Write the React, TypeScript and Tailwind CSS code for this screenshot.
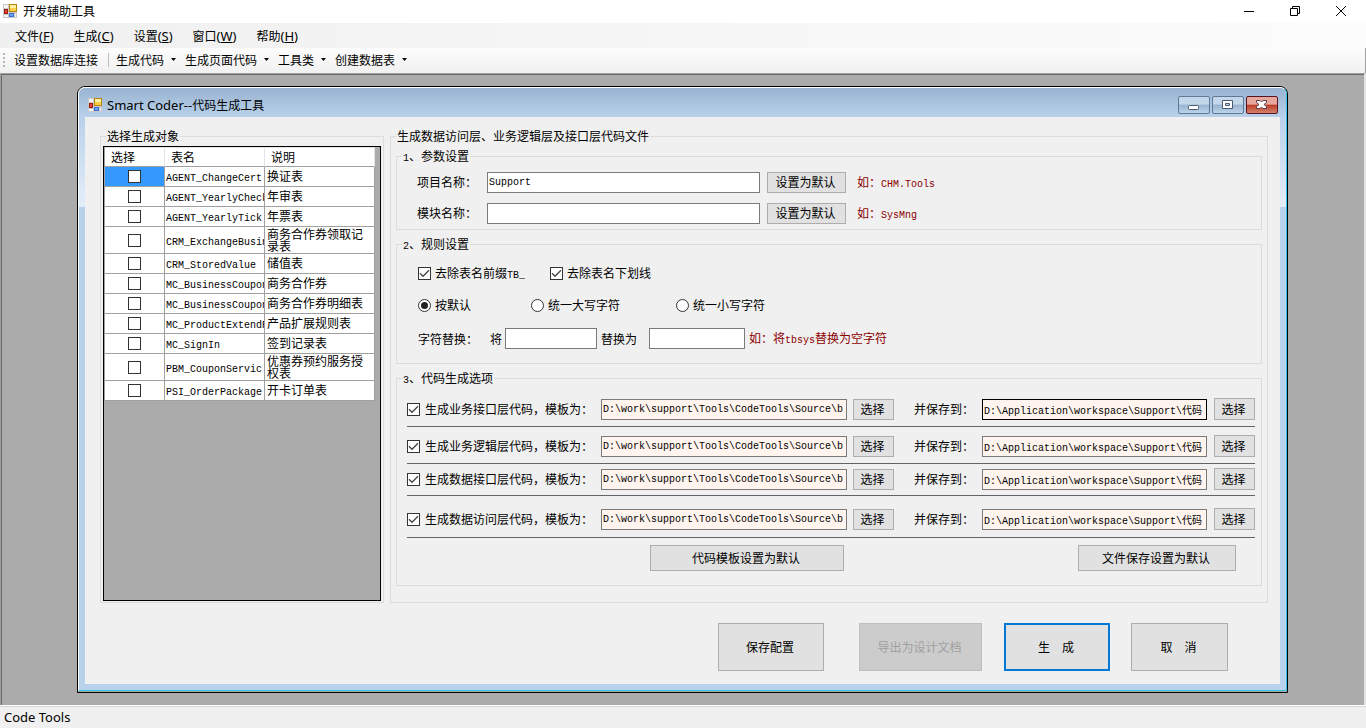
import { useId } from "react";
import type { ReactNode } from "react";
import { clsx } from "clsx";

const menus = [
  { label: "文件", hotkey: "F" },
  { label: "生成", hotkey: "C" },
  { label: "设置", hotkey: "S" },
  { label: "窗口", hotkey: "W" },
  { label: "帮助", hotkey: "H" },
];

const toolMenus = ["生成代码", "生成页面代码", "工具类", "创建数据表"];

const tables = [
  { name: "AGENT_ChangeCert", note: "换证表" },
  { name: "AGENT_YearlyCheck", note: "年审表" },
  { name: "AGENT_YearlyTick", note: "年票表" },
  { name: "CRM_ExchangeBusin", note: "商务合作券领取记录表" },
  { name: "CRM_StoredValue", note: "储值表" },
  { name: "MC_BusinessCoupon", note: "商务合作券" },
  { name: "MC_BusinessCoupon", note: "商务合作券明细表" },
  { name: "MC_ProductExtendR", note: "产品扩展规则表" },
  { name: "MC_SignIn", note: "签到记录表" },
  { name: "PBM_CouponServic", note: "优惠券预约服务授权表" },
  { name: "PSI_OrderPackage", note: "开卡订单表" },
];

const outputs = [
  { label: "生成业务接口层代码，模板为：", row: "pt-[14px] pb-[6px]", focused: true },
  { label: "生成业务逻辑层代码，模板为：", row: "pt-2 pb-[6px]", focused: false },
  { label: "生成数据接口层代码，模板为：", row: "pt-1 pb-[5px]", focused: false },
  { label: "生成数据访问层代码，模板为：", row: "pt-3 pb-[7px]", focused: false },
];

const templatePath = "D:\\work\\support\\Tools\\CodeTools\\Source\\b";
const savePath = "D:\\Application\\workspace\\Support\\代码";

export default function App() {
  return (
    <div className="flex min-h-screen flex-col bg-[#f0f0f0] font-['Noto_Sans_CJK_SC',sans-serif] text-[12px] leading-[12px] text-black">
      <header className="flex h-[23px] items-center bg-white pr-[2px] pb-[2px] pl-[3px]">
        <AppIcon />
        <h1 className="ml-[6px] grow">开发辅助工具</h1>
        <button aria-label="最小化" className="flex h-full w-[46px] items-center justify-center">
          <svg width="10" height="10" viewBox="0 0 10 10" stroke="#000"><path d="M0 5.5H10" /></svg>
        </button>
        <button aria-label="还原" className="flex h-full w-[46px] items-center justify-center">
          <svg width="10" height="10" viewBox="0 0 10 10" fill="none" stroke="#000"><path d="M.5 2.5h7v7h-7zM2.5 2.5v-2h7v7h-2" /></svg>
        </button>
        <button aria-label="关闭" className="flex h-full w-[46px] items-center justify-center">
          <svg width="10" height="10" viewBox="0 0 10 10" stroke="#000"><path d="M0 0L10 10M10 0L0 10" /></svg>
        </button>
      </header>

      <nav className="flex h-[25px] items-center gap-5 bg-linear-to-r from-[#f0f0f0] to-[#fcfcfc] pl-[15px]">
        {menus.map((m) => (
          <button key={m.hotkey} className="whitespace-nowrap">
            {m.label}
            <span className="font-['Noto_Sans',sans-serif] text-[13px]">(<u>{m.hotkey}</u>)</span>
          </button>
        ))}
      </nav>

      <div className="flex h-[25px] items-center border-r border-[#a0a0a0] bg-linear-to-b from-[#fdfdfd] to-[#f0f0f0] pb-[2px] pl-[3px]">
        <span className="flex flex-col gap-[2px]">
          <i className="size-[2px] bg-[#b8b8b8]" />
          <i className="size-[2px] bg-[#b8b8b8]" />
          <i className="size-[2px] bg-[#b8b8b8]" />
          <i className="size-[2px] bg-[#b8b8b8]" />
        </span>
        <button className="ml-[9px]">设置数据库连接</button>
        <span className="mr-[7px] ml-[10px] h-[14px] w-px bg-[#bdbdbd]" />
        <div className="flex gap-[9px]">
          {toolMenus.map((t) => (
            <button key={t} className="flex items-center gap-[7px]">
              {t}
              <svg width="5" height="3" viewBox="0 0 5 3"><path d="M0 0h5L2.500 3z" /></svg>
            </button>
          ))}
        </div>
      </div>

      <main className="flex grow flex-col border-t border-r-2 border-l border-t-[#a0a0a0] border-r-[#e3e3e3] border-l-[#a0a0a0] bg-[#ababab] pt-3 pr-[76px] pb-3 pl-[76px] shadow-[inset_1px_1px_0_#696969]">
        <CoderWindow />
      </main>

      <footer className="border-t border-white">
        <div className="flex h-[22px] items-center border-t border-[#d7d7d7] pb-[2px] pl-1 font-['Noto_Sans',sans-serif] text-[13px]">
          Code Tools
        </div>
      </footer>
    </div>
  );
}

function CoderWindow() {
  return (
    <section className="grow rounded-t-lg border border-black">
      <div className="flex h-full flex-col rounded-t-[7px] border border-t-white border-r-[#2ec8e0] border-b-[#2ec8e0] border-l-white bg-[#b9d1ea]">
        <div className="flex h-[29px] items-center rounded-t-[6px] bg-linear-to-b from-[#99b4d1] to-[#b9d1ea] pt-1 pr-[8px] pl-[9px]">
          <AppIcon />
          <h2 className="ml-[5px] grow">
            <span className="font-['Noto_Sans',sans-serif] text-[13px]">Smart Coder--</span>代码生成工具
          </h2>
          <div className="flex gap-[2px]">
            <CaptionButton label="最小化窗口">
              <rect x="10.500" y="9.500" width="10" height="4" rx="1" fill="#fff" stroke="#4b5a6e" />
            </CaptionButton>
            <CaptionButton label="最大化窗口">
              <path d="M10.500 4.500h10v8h-10z" fill="#fff" stroke="#4b5a6e" />
              <path d="M13.500 7.500h4v2h-4z" fill="#b9d1ea" stroke="#4b5a6e" />
            </CaptionButton>
            <CaptionButton label="关闭窗口" danger>
              <path d="M10.500 4.500h3.500l1.500 1.500 1.500-1.500h3.500v2l-2.500 2 2.500 2v2h-3.500l-1.500-1.500-1.500 1.500h-3.500v-2l2.500-2-2.500-2z" fill="#fff" stroke="#5a3b42" />
            </CaptionButton>
          </div>
        </div>

        <div className="flex grow flex-col bg-linear-to-b from-[#b9d1ea] to-[#e4eef9] to-[90px] bg-[length:100%_90px] bg-no-repeat px-[6px] pb-[6px]">
          <form className="flex grow flex-col bg-[#f0f0f0] pt-[13px] pr-3 pb-[13px] pl-[15px]" onSubmit={(e) => e.preventDefault()}>
            <div className="flex grow gap-[6px]">
              <GroupBox title="选择生成对象" className="flex w-[284px] shrink-0 flex-col" body="flex grow flex-col px-[2px] pt-1 pb-px">
                <TableGrid />
              </GroupBox>
              <GroupBox
                title="生成数据访问层、业务逻辑层及接口层代码文件"
                className="min-w-0 grow"
                body="flex flex-col gap-2 px-[5px] pt-2 pb-4"
              >
                <ParamGroup />
                <RuleGroup />
                <OutputGroup />
              </GroupBox>
            </div>
            <div className="flex justify-end pt-5 pr-10">
              <PushButton className="mr-[35px] h-12 w-[106px]">保存配置</PushButton>
              <PushButton className="mr-[22px] h-12 w-[123px]" disabled>导出为设计文档</PushButton>
              <PushButton className="mr-[21px] h-12 w-[106px]" primary>生　成</PushButton>
              <PushButton className="h-12 w-[97px]">取　消</PushButton>
            </div>
          </form>
        </div>
      </div>
    </section>
  );
}

function TableGrid() {
  return (
    <div className="grow border border-black bg-[#ababab]">
      <table className="w-[271px] table-fixed border-separate border-spacing-0 border-l border-[#a0a0a0] bg-white text-left">
        <colgroup>
          <col className="w-[60px]" />
          <col className="w-[100px]" />
          <col className="w-[110px]" />
        </colgroup>
        <thead>
          <tr className="h-5">
            {["选择", "表名", "说明"].map((h) => (
              <th key={h} className="border-t border-r border-b border-t-[#e5e5e5] border-r-[#e5e5e5] border-b-[#a0a0a0] p-0 pl-[6px] font-normal">{h}</th>
            ))}
          </tr>
        </thead>
        <tbody>
          {tables.map((t, i) => (
            <tr key={i} className={t.note.length > 8 ? "h-[27px]" : "h-5"}>
              <td className={clsx("border-r border-b border-[#a0a0a0] p-0", i === 0 && "bg-[#3399ff]")}>
                <div className="flex justify-center">
                  <CheckBox label={t.name} />
                </div>
              </td>
              <td className="overflow-hidden border-r border-b border-[#a0a0a0] p-0 pl-px whitespace-nowrap"><Mono>{t.name}</Mono></td>
              <td className="border-r border-b border-[#a0a0a0] p-0 pb-px pl-[2px]">{t.note}</td>
            </tr>
          ))}
        </tbody>
      </table>
    </div>
  );
}

function ParamGroup() {
  return (
    <GroupBox title={<><Mono>1</Mono>、参数设置</>} body="flex flex-col gap-[9px] pt-[9px] pb-[5px] pl-5">
      <ParamRow label="项目名称：" value="Support" example="CHM.Tools" />
      <ParamRow label="模块名称：" value="" example="SysMng" />
    </GroupBox>
  );
}

function ParamRow({ label, value, example }: { label: string; value: string; example: string }) {
  const id = useId();
  return (
    <div className="flex h-[22px] items-center">
      <label htmlFor={id} className="w-[70px]">{label}</label>
      <TextBox id={id} value={value} className="w-[273px] bg-white" />
      <PushButton className="mr-[11px] ml-[7px] h-[21px] w-[79px]">设置为默认</PushButton>
      <span className="text-[#8b0000]">如：<Mono>{example}</Mono></span>
    </div>
  );
}

function RuleGroup() {
  const from = useId();
  const to = useId();
  return (
    <GroupBox title={<><Mono>2</Mono>、规则设置</>} body="pt-[13px] pb-[14px] pl-[21px]">
      <div className="flex h-5 items-center">
        <label className="flex w-[132px] items-center gap-1">
          <CheckBox checked />
          <span>去除表名前缀<Mono>TB_</Mono></span>
        </label>
        <label className="flex items-center gap-1">
          <CheckBox checked />
          去除表名下划线
        </label>
      </div>
      <div className="mt-3 flex h-5 items-center">
        <Radio className="w-[113px]" label="按默认" checked />
        <Radio className="w-[145px]" label="统一大写字符" />
        <Radio label="统一小写字符" />
      </div>
      <div className="mt-[13px] flex items-center">
        <span className="w-[72px]">字符替换：</span>
        <label htmlFor={from} className="w-[15px]">将</label>
        <TextBox id={from} value="" className="w-[92px] bg-white" />
        <label htmlFor={to} className="ml-1 w-12">替换为</label>
        <TextBox id={to} value="" className="w-[96px] bg-white" />
        <span className="ml-1 text-[#8b0000]">如：将<Mono>tbsys</Mono>替换为空字符</span>
      </div>
    </GroupBox>
  );
}

function OutputGroup() {
  return (
    <GroupBox title={<><Mono>3</Mono>、代码生成选项</>} body="pr-[6px] pb-[14px] pl-[10px]">
      {outputs.map((o) => (
        <div key={o.label} className={clsx("flex items-center border-b border-[#646464]", o.row)}>
          <label className="flex w-[194px] shrink-0 items-center gap-[5px]">
            <CheckBox checked />
            {o.label}
          </label>
          <TextBox label="模板路径" value={templatePath} className="w-[246px] min-w-0 grow bg-[#fff5ee]" />
          <PushButton className="mr-5 ml-[6px] h-[21px] w-[41px]">选择</PushButton>
          <span className="w-[68px] shrink-0">并保存到：</span>
          <TextBox
            label="保存路径"
            value={savePath}
            className={clsx("w-[225px] min-w-0 grow bg-[#fff5ee]", o.focused && "border-black")}
          />
          <PushButton className="ml-[7px] h-[22px] w-[41px]">选择</PushButton>
        </div>
      ))}
      <div className="flex justify-between pt-[7px] pr-[19px] pl-[243px]">
        <PushButton className="h-[26px] w-[194px]">代码模板设置为默认</PushButton>
        <PushButton className="h-[26px] w-[158px]">文件保存设置为默认</PushButton>
      </div>
    </GroupBox>
  );
}

function GroupBox({ title, className, body, children }: { title: ReactNode; className?: string; body: string; children: ReactNode }) {
  return (
    <fieldset className={clsx("border border-[#dcdcdc]", className)}>
      <legend className="ml-[5px] h-3 px-px whitespace-nowrap">{title}</legend>
      <div className={body}>{children}</div>
    </fieldset>
  );
}

// 半角字符固定 6px 宽
function Mono({ children }: { children: ReactNode }) {
  return <span className="font-['Liberation_Mono',monospace] text-[10px] leading-[8px]">{children}</span>;
}

function TextBox({ id, label, value, className }: { id?: string; label?: string; value: string; className?: string }) {
  return (
    <input
      id={id}
      type="text"
      aria-label={label}
      defaultValue={value}
      className={clsx(
        "h-[21px] border px-px font-['Liberation_Mono','Noto_Sans_CJK_SC',monospace] text-[10px] outline-none",
        !className?.includes("border-black") && "border-[#7a7a7a]",
        className,
      )}
    />
  );
}

function CheckBox({ checked, label }: { checked?: boolean; label?: string }) {
  return (
    <span className="relative size-[13px] shrink-0">
      <input
        type="checkbox"
        aria-label={label}
        defaultChecked={checked}
        className="peer block size-[13px] appearance-none border border-[#333] bg-white"
      />
      <svg className="pointer-events-none absolute inset-0 hidden peer-checked:block" width="13" height="13" viewBox="0 0 13 13" fill="none" stroke="#444" strokeWidth="1.300">
        <path d="M2 6.300L5 9.300L11 3.300" />
      </svg>
    </span>
  );
}

function Radio({ label, checked, className }: { label: string; checked?: boolean; className?: string }) {
  return (
    <label className={clsx("flex items-center gap-1", className)}>
      <span className="relative size-[13px]">
        <input type="radio" name="letterCase" defaultChecked={checked} className="peer block size-[13px] appearance-none rounded-full border border-[#333] bg-white" />
        <i className="pointer-events-none absolute inset-[3px] hidden rounded-full bg-[#222] peer-checked:block" />
      </span>
      {label}
    </label>
  );
}

function PushButton({ children, className, disabled, primary }: { children: ReactNode; className?: string; disabled?: boolean; primary?: boolean }) {
  return (
    <button
      type={primary ? "submit" : "button"}
      disabled={disabled}
      className={clsx(
        "shrink-0 pr-[2px] pb-px whitespace-nowrap",
        primary ? "border-2 border-[#0078d7] bg-[#e1e1e1]" : "border",
        !primary && (disabled ? "border-[#bfbfbf] bg-[#cccccc] text-[#a0a0a0]" : "border-[#adadad] bg-[#e1e1e1]"),
        className,
      )}
    >
      {children}
    </button>
  );
}

function CaptionButton({ label, danger, children }: { label: string; danger?: boolean; children: ReactNode }) {
  return (
    <button
      type="button"
      aria-label={label}
      className={clsx(
        "h-[18px] w-8 rounded-[2px] border",
        danger
          ? "border-[#5a1420] bg-linear-to-b from-[#e8a79c] from-45% via-[#bb3c25] via-50% to-[#d3806c]"
          : "border-[#5f7896] bg-linear-to-b from-[#c3d6ea] from-45% via-[#98b3d0] via-50% to-[#bcd3ea]",
      )}
    >
      <svg className="-m-px" width="32" height="18" viewBox="0 0 32 18" fill="none">{children}</svg>
    </button>
  );
}

function AppIcon() {
  return (
    <svg className="shrink-0" width="14" height="14" viewBox="0 0 14 14" aria-hidden="true">
      <rect width="14" height="14" fill="#c9c9c9" />
      <path d="M1 1h4v3H1zM1 11h4v2H1zM12 10h1v3h-1z" fill="#f4f4f4" />
      <rect x="6.500" y=".500" width="7" height="7" fill="#fbd044" stroke="#b8860b" />
      <path d="M7 1h6v3H7z" fill="#fff0a8" />
      <rect x="1.500" y="5.500" width="3" height="4" fill="#e0452f" stroke="#9c1c14" />
      <rect x="6.500" y="9.500" width="4" height="3" fill="#6ea4f4" stroke="#3b6fd0" />
    </svg>
  );
}
